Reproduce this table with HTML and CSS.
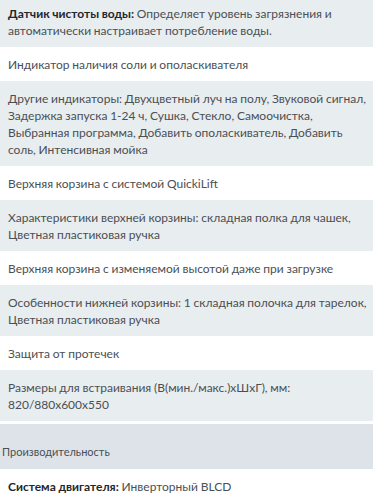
FILE: index.html
```html
<!DOCTYPE html>
<html lang="ru">

<head>
    <meta charset="UTF-8">
    <meta name="viewport" content="width=device-width, initial-scale=1.0">
    <title>Характеристики</title>
    <link rel="stylesheet" href="styles.css">
</head>

<body>
    <div class="specs">
        <ul class="spec-list">
            <li class="spec odd"><b>Датчик чистоты воды:</b> Определяет уровень загрязнения и автоматически настраивает потребление воды.</li>
            <li class="spec">Индикатор наличия соли и ополаскивателя</li>
            <li class="spec odd">Другие индикаторы: Двухцветный луч на полу, Звуковой сигнал, Задержка запуска 1-24 ч, Сушка, Стекло, Самоочистка, Выбранная программа, Добавить ополаскиватель, Добавить соль, Интенсивная мойка</li>
            <li class="spec">Верхняя корзина с системой QuickiLift</li>
            <li class="spec odd">Характеристики верхней корзины: складная полка для чашек, Цветная пластиковая ручка</li>
            <li class="spec">Верхняя корзина с изменяемой высотой даже при загрузке</li>
            <li class="spec odd">Особенности нижней корзины: 1 складная полочка для тарелок, Цветная пластиковая ручка</li>
            <li class="spec">Защита от протечек</li>
            <li class="spec odd">Размеры для встраивания (В(мин./макс.)хШхГ), мм: 820/880х600х550</li>
        </ul>

        <div class="spec-title">Производительность</div>

        <ul class="spec-list">
            <li class="spec"><b>Система двигателя:</b> Инверторный BLCD</li>
        </ul>
    </div>
</body>

</html>
```

FILE: styles.css
```css
body {
    margin: 0;
    background: #fff;
    font-family: Lato, "Noto Sans", Arial, sans-serif;
    color: #4b4f54;
}

.specs {
    margin-top: -4px;
}

.spec-list {
    list-style: none;
    margin: 0;
    padding: 0;
}

.spec {
    padding: 8.5px 0 8.5px 8px;
    font-size: 12px;
    line-height: 17px;
    word-spacing: -0.3px;
}

.spec.odd {
    background: #e8edf0;
}

.spec b {
    color: #23272b;
    font-weight: bold;
}

.spec-title {
    margin-top: 3px;
    padding: 20px 2px 9px;
    background: #dde3e8;
    font-size: 11px;
    line-height: 16px;
    color: #4b4f54;
}
```
